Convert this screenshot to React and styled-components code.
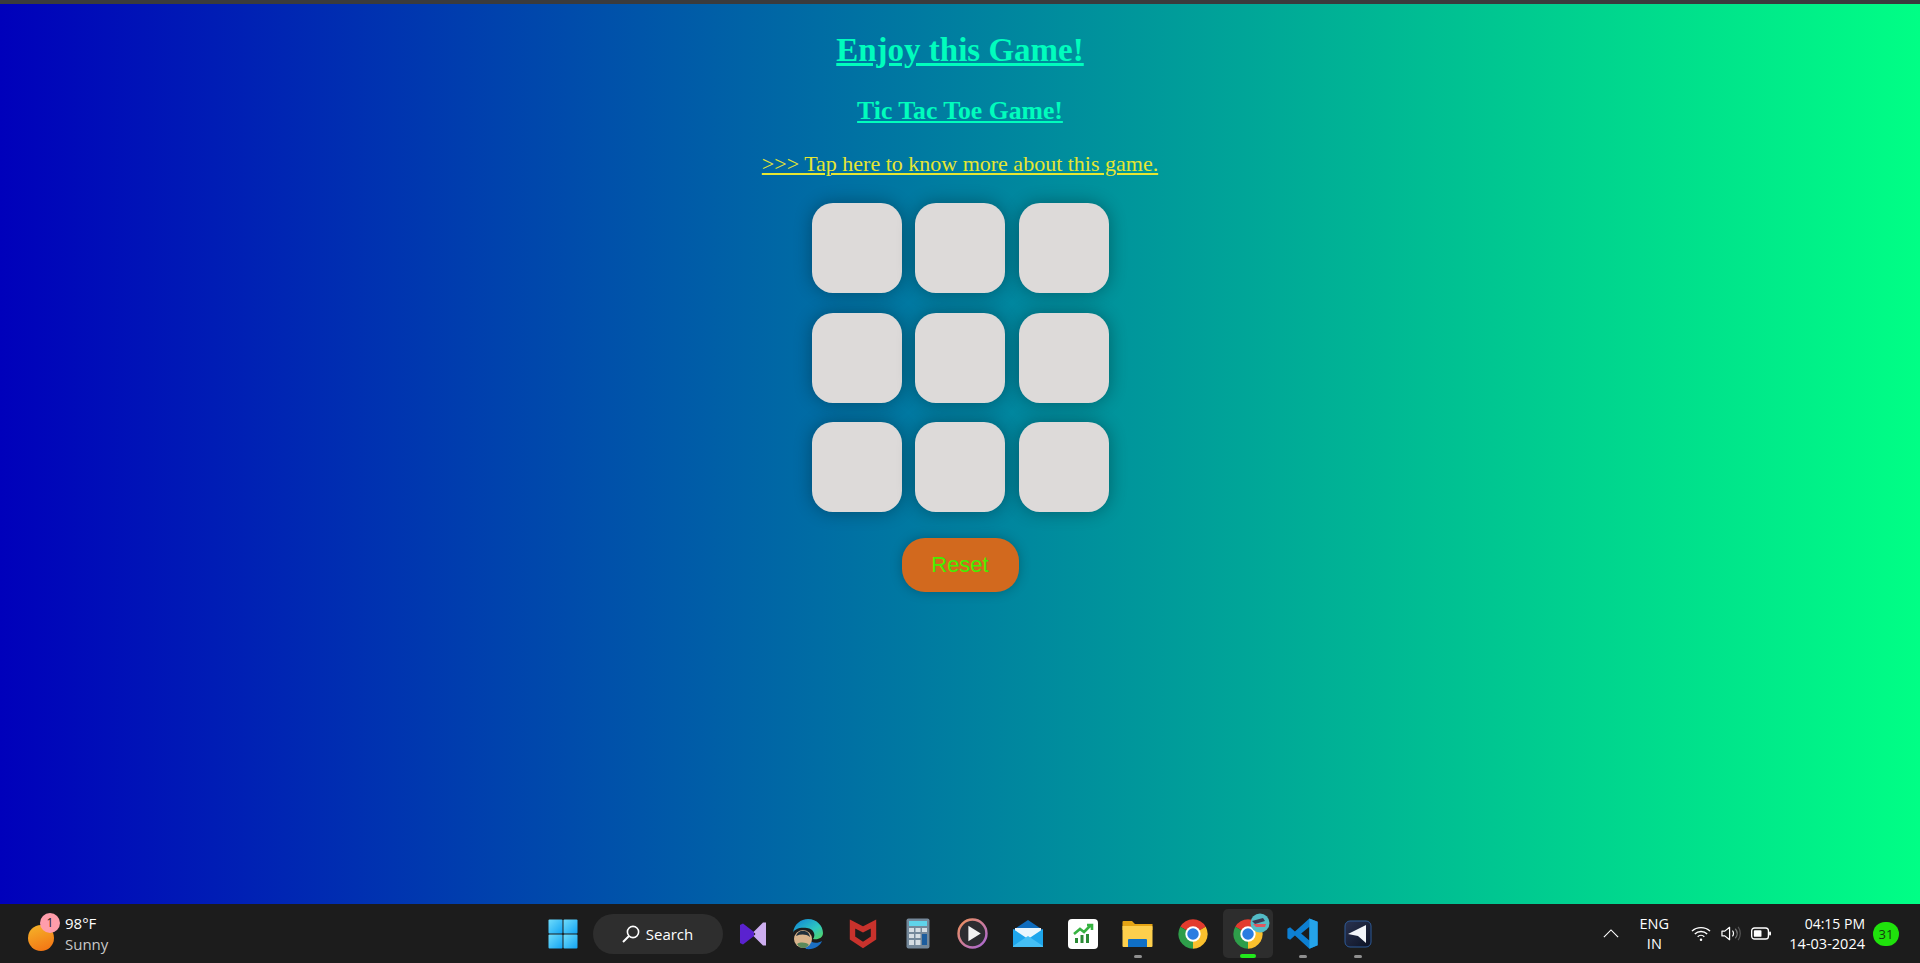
import React from 'react';
import styled, { createGlobalStyle } from 'styled-components';

const GlobalStyle = createGlobalStyle`
    html, body {
        margin: 0;
        padding: 0;
        height: 100%;
        overflow: hidden;
    }
    #root {
        height: 100%;
    }
`

const Screen = styled.div`
    width: 100%;
    height: 963px;
    display: flex;
    flex-direction: column;
    background-color: #1c1c1c;
`

const TopStrip = styled.div`
    height: 4px;
    flex-shrink: 0;
    background-color: #3a3b3d;
`

const Page = styled.main`
    height: 900px;
    flex-shrink: 0;
    display: flex;
    flex-direction: column;
    align-items: center;
    background: linear-gradient(to right, #0000bb, #00ff85);
    font-family: "Liberation Serif", "Times New Roman", serif;
`

const Title = styled.h1`
    margin: 28px 0 0;
    font-size: 33px;
    line-height: 37px;
    font-weight: bold;
    color: #00fdbd;
    text-decoration: underline;
`

const SubTitle = styled.h2`
    margin: 26.5px 0 0;
    font-size: 25.7px;
    line-height: 30px;
    font-weight: bold;
    color: #00fdbd;
    text-decoration: underline;
`

const InfoLink = styled.a`
    margin-top: 25.5px;
    font-size: 22px;
    line-height: 26px;
    color: #e6e632;
    text-decoration: underline;
    cursor: pointer;
`

const Board = styled.div`
    margin-top: 26px;
    display: grid;
    grid-template-columns: repeat(3, 90px);
    grid-auto-rows: 90px;
    column-gap: 13.5px;
    row-gap: 19.5px;
`

const Cell = styled.button`
    border: none;
    padding: 0;
    border-radius: 21px;
    background-color: #dddad9;
    box-shadow: 0 0 18px rgba(0, 0, 0, 0.32);
    cursor: pointer;
`

const ResetButton = styled.button`
    margin-top: 26px;
    width: 117px;
    height: 54px;
    border: none;
    border-radius: 23px;
    background-color: #d2691e;
    color: #44ee00;
    font-family: "Liberation Sans", Arial, sans-serif;
    font-size: 22px;
    box-shadow: 0 0 12px rgba(0, 0, 0, 0.25);
    cursor: pointer;
`

const Taskbar = styled.footer`
    flex: 1;
    display: grid;
    grid-template-columns: 1fr auto 1fr;
    align-items: center;
    background-color: #1c1c1c;
    color: #ffffff;
    font-family: "Open Sans", "Noto Sans", sans-serif;
`

const Weather = styled.div`
    display: flex;
    align-items: center;
    gap: 11px;
    padding-left: 28px;
`

const WeatherIcon = styled.div`
    position: relative;
    width: 26px;
    height: 26px;
    margin-top: 8px;
    border-radius: 50%;
    background: linear-gradient(160deg, #f5b62a, #f36f12);
`

const WeatherBadge = styled.span`
    position: absolute;
    top: -12px;
    left: 12px;
    width: 20px;
    height: 20px;
    border-radius: 50%;
    background-color: #ff9dab;
    color: #1c1c1c;
    font-size: 12px;
    line-height: 20px;
    text-align: center;
`

const WeatherText = styled.div`
    display: flex;
    flex-direction: column;
    font-size: 15px;
    line-height: 21px;
`

const MutedLine = styled.span`
    color: #c8c8c8;
`

const Dock = styled.div`
    display: flex;
    align-items: center;
    gap: 5px;
`

const Slot = styled.div`
    position: relative;
    width: 50px;
    height: 49px;
    display: flex;
    align-items: center;
    justify-content: center;
    border-radius: 5px;
    background-color: ${(props) => (props.$active ? '#2d2d2d' : 'transparent')};
`

const RunDot = styled.span`
    position: absolute;
    bottom: 0;
    left: 50%;
    transform: translateX(-50%);
    width: ${(props) => (props.$active ? '16px' : '8px')};
    height: ${(props) => (props.$active ? '4px' : '3px')};
    border-radius: 2px;
    background-color: ${(props) => (props.$active ? '#22e81c' : '#8f8f8f')};
`

const SearchPill = styled.div`
    width: 130px;
    height: 40px;
    display: flex;
    align-items: center;
    justify-content: center;
    gap: 6px;
    border-radius: 20px;
    background-color: #2e2e2e;
    font-size: 15px;
`

const Tray = styled.div`
    display: flex;
    align-items: center;
    justify-content: flex-end;
    padding-right: 21px;
`

const TrayChevron = styled.svg`
    width: 16px;
    height: 9px;
    margin-right: 15px;
`

const Language = styled.div`
    width: 40px;
    margin-right: 17px;
    display: flex;
    flex-direction: column;
    align-items: center;
    font-size: 14.5px;
    line-height: 20px;
`

const TrayIcons = styled.div`
    display: flex;
    align-items: center;
    gap: 10px;
    margin-right: 18px;
`

const Clock = styled.div`
    display: flex;
    flex-direction: column;
    align-items: flex-end;
    font-size: 14px;
    line-height: 20px;
`

const ClockDate = styled.span`
    font-size: 14.5px;
`

const NotifyBadge = styled.span`
    width: 26px;
    height: 24px;
    margin-left: 8px;
    border-radius: 12px;
    background-color: #1fe20c;
    color: #143a10;
    font-size: 13px;
    line-height: 24px;
    text-align: center;
`

const StartIcon = () => (
    <svg width="30" height="30" viewBox="0 0 30 30">
        <defs>
            <linearGradient id="startFill" x1="0" y1="0" x2="1" y2="1">
                <stop offset="0" stopColor="#6fdcfb" />
                <stop offset="1" stopColor="#13a4f3" />
            </linearGradient>
        </defs>
        <rect x="0.5" y="0.5" width="14" height="14" rx="1" fill="url(#startFill)" />
        <rect x="15.5" y="0.5" width="14" height="14" rx="1" fill="url(#startFill)" />
        <rect x="0.5" y="15.5" width="14" height="14" rx="1" fill="url(#startFill)" />
        <rect x="15.5" y="15.5" width="14" height="14" rx="1" fill="url(#startFill)" />
    </svg>
);

const SearchIcon = () => (
    <svg width="18" height="18" viewBox="0 0 18 18" fill="none" stroke="#ffffff" strokeWidth="1.6">
        <circle cx="11" cy="7" r="5.6" />
        <path d="M7 11 L1 17" strokeWidth="2" />
    </svg>
);

const VisualStudioIcon = () => (
    <svg width="28" height="24" viewBox="0 0 28 24">
        <path d="M1 3 L4 1.5 L15 10 L15 14 L4 22.5 L1 21 Z" fill="#5a22cf" />
        <path d="M27 0.5 V23.5 L24 23.5 L14.5 14 L16.5 12 L14.5 10 L24 0.5 Z" fill="#cdaef0" />
    </svg>
);

const EdgeIcon = () => (
    <svg width="32" height="32" viewBox="0 0 32 32">
        <defs>
            <linearGradient id="edgeFill" x1="0" y1="0" x2="1" y2="1">
                <stop offset="0" stopColor="#0c7fd8" />
                <stop offset="0.6" stopColor="#2fc7c0" />
                <stop offset="1" stopColor="#58d65a" />
            </linearGradient>
        </defs>
        <path d="M1 15 C2 6 9 1 16 1 C25 1 31 8 31 15 C31 20 26 22 21 21 C24 17 22 11 15 10 C8 9 2 11 1 15 Z" fill="url(#edgeFill)" />
        <path d="M14 31 C22 32 28 28 30 23 C25 26 19 25 16 21 C13 24 12 28 14 31 Z" fill="#1b6fc4" />
        <circle cx="11" cy="21" r="9" fill="#d8b48c" />
        <path d="M4 18 C6 11 17 11 18 19 C14 16 9 16 4 18 Z" fill="#20303c" />
        <path d="M5 26 C8 24 14 24 17 27 C13 31 8 31 5 26 Z" fill="#5a8a5c" />
    </svg>
);

const McAfeeIcon = () => (
    <svg width="28" height="31" viewBox="0 0 28 31" fill="none" stroke="#c8322c" strokeWidth="5.4" strokeLinejoin="miter">
        <path d="M3.5 6 L14 11.5 L24.5 6 V20 L14 27 L3.5 20 Z" />
    </svg>
);

const CalculatorIcon = () => (
    <svg width="24" height="31" viewBox="0 0 24 31">
        <rect x="0.5" y="0.5" width="23" height="30" rx="2" fill="#74889a" />
        <rect x="3" y="3" width="18" height="5" fill="#5fd3ea" />
        <path d="M3 10 h5 v4 h-5z M9.5 10 h5 v4 h-5z M16 10 h5 v4 h-5z M3 16 h5 v4 h-5z M9.5 16 h5 v4 h-5z M3 22 h5 v5 h-5z M9.5 22 h5 v5 h-5z" fill="#d5dde3" />
        <rect x="16" y="16" width="5" height="11" fill="#1c5d9e" />
    </svg>
);

const PlayerIcon = () => (
    <svg width="31" height="31" viewBox="0 0 30 30">
        <defs>
            <linearGradient id="playerRing" x1="0" y1="0" x2="1" y2="1">
                <stop offset="0" stopColor="#f0925a" />
                <stop offset="1" stopColor="#a766d8" />
            </linearGradient>
        </defs>
        <circle cx="15" cy="15" r="13.5" fill="#2c2c30" stroke="url(#playerRing)" strokeWidth="2.4" />
        <path d="M11 7.5 L23 15 L11 22.5 Z" fill="#f2f2f2" />
    </svg>
);

const MailIcon = () => (
    <svg width="32" height="29" viewBox="0 0 32 29">
        <path d="M1 11 L16 1 L31 11 V14 H1 Z" fill="#0f6cbd" />
        <path d="M3 9 H29 V17 L16 24 L3 17 Z" fill="#eaf6fd" />
        <path d="M1 10 L16 20 L31 10 V27 Q31 28 30 28 H2 Q1 28 1 27 Z" fill="#1ea6ec" />
        <path d="M1 27 L16 17 L31 27 V28 H1 Z" fill="#45bff5" />
    </svg>
);

const StocksIcon = () => (
    <svg width="30" height="30" viewBox="0 0 30 30">
        <rect width="30" height="30" rx="4" fill="#ffffff" />
        <path d="M6 15 L12 10 L16 13 L23 6 M19 6 H24 V11" fill="none" stroke="#37b341" strokeWidth="2.6" />
        <path d="M7 19 h3 v5 h-3z M12.5 16 h3 v8 h-3z M18 15 h3 v9 h-3z" fill="#2a8a34" />
    </svg>
);

const FolderIcon = () => (
    <svg width="31" height="28" viewBox="0 0 31 28">
        <path d="M0.5 2 Q0.5 1 1.5 1 H10 L13 4 H30.5 V10 H0.5 Z" fill="#e5a414" />
        <path d="M0.5 6 H30 Q30.5 6 30.5 7 V26 Q30.5 27 29.5 27 H1.5 Q0.5 27 0.5 26 Z" fill="#fdcf4d" />
        <path d="M6 20 Q6 19 7 19 H24 Q25 19 25 20 V27 H6 Z" fill="#0f6fc6" />
    </svg>
);

const ChromeIcon = () => (
    <svg width="32" height="32" viewBox="0 0 48 48">
        <path d="M24 24 L4.95 13 A22 22 0 0 1 43.05 13 Z" fill="#e33b2e" />
        <path d="M24 24 L43.05 13 A22 22 0 0 1 24 46 Z" fill="#fbc02d" />
        <path d="M24 24 L24 46 A22 22 0 0 1 4.95 13 Z" fill="#2e9e4a" />
        <circle cx="24" cy="24" r="11.5" fill="#ffffff" />
        <circle cx="24" cy="24" r="8.6" fill="#2a7de1" />
    </svg>
);

const ProfileBadge = styled.svg`
    position: absolute;
    top: 4px;
    right: 3px;
`

const ChromeProfile = () => (
    <ProfileBadge width="20" height="20" viewBox="0 0 20 20">
        <circle cx="10" cy="10" r="9.5" fill="#53bcc6" />
        <path d="M2 8 L13 5 L15 8 L5 11 Z" fill="#3a3a52" />
        <path d="M3 11 H16 L15 14 H6 Z" fill="#e0575f" />
    </ProfileBadge>
);

const VsCodeIcon = () => (
    <svg width="33" height="33" viewBox="0 0 48 48">
        <path fillRule="evenodd" d="M34 2 L13 21 L6 15 L2 17 V31 L6 33 L13 27 L34 46 L46 41 V7 Z M34 14 L22 24 L34 34 Z" fill="#0d7fd2" />
        <path d="M34 2 L46 7 V41 L34 46 Z" fill="#25a4ea" />
    </svg>
);

const ArrowAppIcon = () => (
    <svg width="28" height="28" viewBox="0 0 28 28">
        <defs>
            <linearGradient id="arrowTile" x1="0" y1="0" x2="1" y2="1">
                <stop offset="0" stopColor="#2a3350" />
                <stop offset="1" stopColor="#0c1224" />
            </linearGradient>
        </defs>
        <rect x="1" y="1" width="26" height="26" rx="5" fill="url(#arrowTile)" stroke="#2d5a98" />
        <path d="M22 5 V23 L14 16 L4 14 Z" fill="#f2f4f8" />
    </svg>
);

const WifiIcon = () => (
    <svg width="20" height="17" viewBox="0 0 21 17" fill="none" stroke="#ffffff" strokeWidth="1.4">
        <path d="M1 6 C6 1 15 1 20 6" />
        <path d="M4 9 C7.5 5.5 13.5 5.5 17 9" />
        <path d="M7 12 C9 10 12 10 14 12" />
        <circle cx="10.5" cy="15" r="1.3" fill="#ffffff" stroke="none" />
    </svg>
);

const VolumeIcon = () => (
    <svg width="20" height="17" viewBox="0 0 21 17" fill="none" strokeWidth="1.3">
        <path d="M1 6 H4 L9 2 V15 L4 11 H1 Z" stroke="#ffffff" strokeLinejoin="round" />
        <path d="M12 5.5 C13.5 7 13.5 10 12 11.5" stroke="#ffffff" />
        <path d="M15 3.5 C17.5 6.5 17.5 10.5 15 13.5" stroke="#777777" />
        <path d="M18 1.5 C21 5.5 21 11.5 18 15.5" stroke="#555555" />
    </svg>
);

const BatteryIcon = () => (
    <svg width="20" height="13" viewBox="0 0 21 13">
        <rect x="0.7" y="0.7" width="17.6" height="11.6" rx="3" fill="none" stroke="#ffffff" strokeWidth="1.4" />
        <rect x="3" y="3" width="8" height="7" rx="1" fill="#ffffff" />
        <rect x="19" y="4.5" width="2" height="4" rx="1" fill="#ffffff" />
    </svg>
);

const dockApps = [
    { id: 'vs', icon: <VisualStudioIcon /> },
    { id: 'edge', icon: <EdgeIcon /> },
    { id: 'mcafee', icon: <McAfeeIcon /> },
    { id: 'calc', icon: <CalculatorIcon /> },
    { id: 'player', icon: <PlayerIcon /> },
    { id: 'mail', icon: <MailIcon /> },
    { id: 'stocks', icon: <StocksIcon /> },
    { id: 'folder', icon: <FolderIcon />, running: true },
    { id: 'chrome', icon: <ChromeIcon /> },
    { id: 'chromeActive', icon: <><ChromeIcon /><ChromeProfile /></>, running: true, active: true },
    { id: 'vscode', icon: <VsCodeIcon />, running: true },
    { id: 'arrow', icon: <ArrowAppIcon />, running: true },
];

const cells = [0, 1, 2, 3, 4, 5, 6, 7, 8];

const App = () => {
    return (
        <Screen>
            <GlobalStyle />
            <TopStrip />
            <Page>
                <Title>Enjoy this Game!</Title>
                <SubTitle>Tic Tac Toe Game!</SubTitle>
                <InfoLink>&gt;&gt;&gt; Tap here to know more about this game.</InfoLink>
                <Board>
                    {cells.map((cell) => <Cell key={cell} aria-label={`cell ${cell + 1}`} />)}
                </Board>
                <ResetButton>Reset</ResetButton>
            </Page>
            <Taskbar>
                <Weather>
                    <WeatherIcon><WeatherBadge>1</WeatherBadge></WeatherIcon>
                    <WeatherText>
                        <span>98°F</span>
                        <MutedLine>Sunny</MutedLine>
                    </WeatherText>
                </Weather>
                <Dock>
                    <Slot><StartIcon /></Slot>
                    <SearchPill><SearchIcon />Search</SearchPill>
                    {dockApps.map((app) => (
                        <Slot key={app.id} $active={app.active}>
                            {app.icon}
                            {app.running && <RunDot $active={app.active} />}
                        </Slot>
                    ))}
                </Dock>
                <Tray>
                    <TrayChevron viewBox="0 0 18 10" fill="none" stroke="#ffffff" strokeWidth="1.3">
                        <path d="M1 9 L9 1 L17 9" />
                    </TrayChevron>
                    <Language>
                        <span>ENG</span>
                        <span>IN</span>
                    </Language>
                    <TrayIcons>
                        <WifiIcon />
                        <VolumeIcon />
                        <BatteryIcon />
                    </TrayIcons>
                    <Clock>
                        <span>04:15 PM</span>
                        <ClockDate>14-03-2024</ClockDate>
                    </Clock>
                    <NotifyBadge>31</NotifyBadge>
                </Tray>
            </Taskbar>
        </Screen>
    );
};

export default App;
